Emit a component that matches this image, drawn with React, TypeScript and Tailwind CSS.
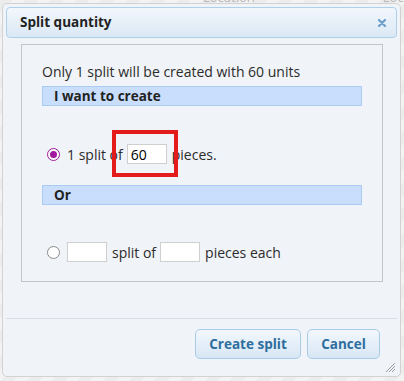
import React from "react";

function Radio({ checked }: { checked?: boolean }) {
  return checked ? (
    <span className="flex w-[13px] h-[13px] rounded-full border-[1.5px] border-[#a0189e] bg-white items-center justify-center shrink-0">
      <span className="block w-[7px] h-[7px] rounded-full bg-[#a0189e]" />
    </span>
  ) : (
    <span className="block w-[13px] h-[13px] rounded-full border border-[#8a8a8a] bg-white shrink-0" />
  );
}

function Field({ value }: { value?: string }) {
  return (
    <div className="w-[40px] h-[20px] border border-[#cfcfcf] bg-white flex items-center pl-[3px] text-[14px] text-black shrink-0">
      {value}
    </div>
  );
}

export default function App() {
  return (
    <div
      className="relative w-[404px] h-[381px] overflow-hidden bg-[repeating-linear-gradient(135deg,#ececec_0px,#ececec_9px,#f3f3f3_9px,#f3f3f3_18px)] text-[#2b2b2b]"
      style={{ fontFamily: '"Open Sans", "Noto Sans", sans-serif' }}
    >
      <div className="h-[3px] overflow-hidden relative">
        <div className="flex text-[13px] text-[#b8b8b8] -mt-[12px]">
          <span className="ml-[203px]">Location</span>
          <span className="ml-[128px]">Loc</span>
        </div>
      </div>

      <div className="relative ml-[2px] w-[399px] h-[374px] border border-[#d2d2d2] rounded-[5px] bg-[#f0f3f7] p-[3px] flex flex-col">
        <div className="h-[31px] shrink-0 rounded-[4px] border border-[#aed0ea] bg-gradient-to-b from-[#f2f7fc] to-[#dae8f5] flex items-center justify-between pl-[13px] pr-[10px]">
          <span className="font-bold text-[13.5px] text-[#222]">Split quantity</span>
          <svg width="8" height="8" viewBox="0 0 8 8" className="mt-[1px]">
            <path d="M1 1 L7 7 M7 1 L1 7" stroke="#6b9ecb" strokeWidth="2.2" strokeLinecap="round" />
          </svg>
        </div>

        <div className="mt-[6px] ml-[15px] mr-[14px] h-[238px] shrink-0 border border-[#c3c5c8] px-[20px] pt-[17px] flex flex-col text-[14px]">
          <div className="h-[20px] leading-[20px]">Only 1 split will be created with 60 units</div>
          <div className="mt-[4px] h-[20px] border border-[#a9cbf4] bg-[#c9defc] pl-[11px] flex items-center font-bold text-[13.5px] text-[#222]">
            I want to create
          </div>
          <div className="mt-[38px] h-[20px] flex items-center">
            <span className="ml-[5px]"><Radio checked /></span>
            <span className="ml-[7px]">1 split of</span>
            <span className="ml-[4px]"><Field value="60" /></span>
            <span className="ml-[5px]">pieces.</span>
          </div>
          <div className="mt-[21px] h-[20px] border border-[#a9cbf4] bg-[#c9defc] pl-[11px] flex items-center font-bold text-[13.5px] text-[#222]">
            Or
          </div>
          <div className="mt-[37px] h-[20px] flex items-center">
            <span className="ml-[5px]"><Radio /></span>
            <span className="ml-[7px]"><Field /></span>
            <span className="ml-[5px]">split of</span>
            <span className="ml-[4px]"><Field /></span>
            <span className="ml-[5px]">pieces each</span>
          </div>
        </div>

        <div className="mt-[36px] h-px bg-[#d8dde3] shrink-0" />

        <div className="mt-[10px] flex justify-end gap-[6px] pr-[17px]">
          <button className="w-[106px] h-[30px] rounded-[5px] border border-[#a9cce6] bg-gradient-to-b from-[#f2f7fc] to-[#d8e7f5] font-bold text-[13.5px] text-[#2e6e9e]">
            Create split
          </button>
          <button className="w-[73px] h-[30px] rounded-[5px] border border-[#a9cce6] bg-gradient-to-b from-[#f2f7fc] to-[#d8e7f5] font-bold text-[13.5px] text-[#2e6e9e]">
            Cancel
          </button>
        </div>

        <svg width="12" height="12" viewBox="0 0 12 12" className="absolute right-[4px] bottom-[3px]">
          <path d="M11 2 L2 11 M11 5 L5 11 M11 8 L8 11" stroke="#9a9a9a" strokeWidth="1" />
        </svg>
      </div>

      <div className="absolute left-[112px] top-[130px] w-[66px] h-[47px] border-[4px] border-[#e31b1b]" />
    </div>
  );
}
